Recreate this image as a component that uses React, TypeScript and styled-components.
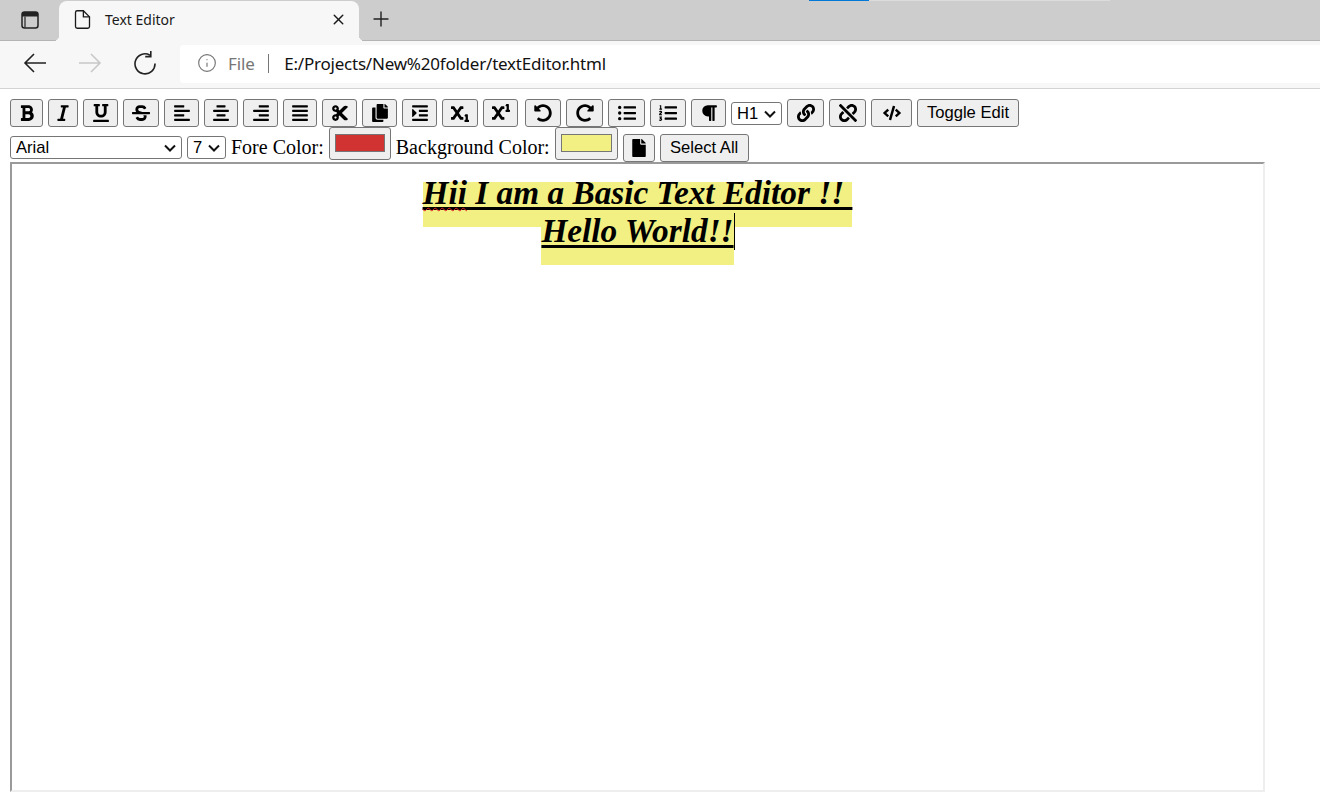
import * as React from 'react'
import styled, { createGlobalStyle } from 'styled-components'
import { FiFile, FiInfo, FiPlus, FiX } from 'react-icons/fi'
import {
    FaAlignCenter, FaAlignJustify, FaAlignLeft, FaAlignRight, FaBold, FaCode, FaCopy, FaCut, FaFile,
    FaIndent, FaItalic, FaLink, FaListOl, FaListUl, FaParagraph, FaRedoAlt, FaStrikethrough,
    FaSubscript, FaSuperscript, FaUnderline, FaUndoAlt, FaUnlink
} from 'react-icons/fa'

const GlobalStyle = createGlobalStyle`
    html, body {
        margin: 0;
        height: 807px;
        overflow: hidden;
        background: #fff;
    }
`

const TabStrip = styled.div`
    position: relative;
    height: 40px;
    background: #cdcdcd;
    border-bottom: 1px solid #b4b4b4;
    display: flex;
    align-items: flex-end;
    font-family: "Noto Sans", sans-serif;
`

const LoadBar = styled.div`
    position: absolute;
    top: 0;
    left: 809px;
    width: 301px;
    height: 1px;
    background: linear-gradient(to right, #0078d7 60px, #dcdcdc 60px);
`

const TabActions = styled.div`
    width: 59px;
    height: 40px;
    display: flex;
    align-items: center;
    justify-content: center;
`

const Tab = styled.div`
    position: relative;
    width: 300px;
    height: 40px;
    margin-bottom: -1px;
    padding: 0 12px 4px 13px;
    box-sizing: border-box;
    background: #f7f7f7;
    border-radius: 8px 8px 0 0;
    display: flex;
    align-items: center;
    color: #1a1a1a;
    font-size: 14px;
    &::before, &::after {
        content: '';
        position: absolute;
        bottom: 0;
        width: 6px;
        height: 6px;
    }
    &::before {
        left: -6px;
        background: radial-gradient(circle at 0 0, transparent 6px, #f7f7f7 6.5px);
    }
    &::after {
        right: -6px;
        background: radial-gradient(circle at 100% 0, transparent 6px, #f7f7f7 6.5px);
    }
`

const TabTitle = styled.span`
    flex: 1;
    margin-left: 12px;
`

const NewTab = styled.div`
    width: 44px;
    height: 40px;
    padding-bottom: 2px;
    box-sizing: border-box;
    display: flex;
    align-items: center;
    justify-content: center;
    color: #222;
`

const NavBar = styled.div`
    height: 47px;
    background: #f7f7f7;
    border-bottom: 1px solid #d2d2d2;
    display: flex;
    align-items: center;
    font-family: "Noto Sans", sans-serif;
`

const NavButtons = styled.div`
    width: 180px;
    padding: 0 0 4px 7px;
    box-sizing: border-box;
    display: flex;
`

const NavButton = styled.div<{ $off?: boolean }>`
    width: 55px;
    display: flex;
    justify-content: center;
    color: ${p => p.$off ? '#c8c8c8' : '#222'};
`

const AddressBar = styled.div`
    flex: 1;
    height: 38px;
    margin-top: -1px;
    padding: 0 0 2px 17px;
    box-sizing: border-box;
    border-radius: 4px 0 0 4px;
    background: #fff;
    display: flex;
    align-items: center;
    font-size: 17px;
`

const FileLabel = styled.span`
    margin-left: 11px;
    color: #767676;
    letter-spacing: -0.1px;
`

const Divider = styled.span`
    width: 1.5px;
    height: 19px;
    margin: 0 15px 0 13px;
    background: #767676;
`

const Url = styled.span`
    color: #111;
    letter-spacing: -0.22px;
`

const Page = styled.div`
    padding: 10px 0 0 10px;
    font-family: "Liberation Serif", serif;
`

const ToolRow = styled.div`
    height: 28px;
    display: flex;
    gap: 5px;
`

const FormatRow = styled.div`
    height: 35px;
    display: flex;
    gap: 5px;
`

const ToolButton = styled.button<{ $width: number; $gap?: number }>`
    width: ${p => p.$width}px;
    height: 28px;
    margin-left: ${p => p.$gap ?? 0}px;
    padding: 0;
    box-sizing: border-box;
    background: #efefef;
    border: 1px solid #767676;
    border-radius: 3px;
    color: #000;
    font-family: "Liberation Sans", sans-serif;
    font-size: 16.6px;
    display: flex;
    align-items: center;
    justify-content: center;
    svg {
        width: 18px;
        height: 18px;
    }
`

const LowButton = styled(ToolButton)`
    margin-top: 7px;
`

const chevron = `url("data:image/svg+xml,%3Csvg xmlns='http://www.w3.org/2000/svg' width='12' height='8' viewBox='0 0 12 8'%3E%3Cpath d='M1 1.5l5 5 5-5' fill='none' stroke='%23111' stroke-width='2'/%3E%3C/svg%3E")`

const Dropdown = styled.select<{ $width: number; $top: number }>`
    appearance: none;
    width: ${p => p.$width}px;
    height: 23px;
    margin-top: ${p => p.$top}px;
    padding: 0 0 0 5px;
    box-sizing: border-box;
    background: #fff ${chevron} no-repeat right 5px center;
    border: 1px solid #767676;
    border-radius: 3px;
    color: #000;
    font-family: "Liberation Sans", sans-serif;
    font-size: 16.6px;
`

const FieldLabel = styled.label`
    margin-top: 8px;
    font-size: 20px;
    line-height: 25px;
    color: #000;
    white-space: nowrap;
`

const ColorButton = styled.div<{ $width: number; $color: string }>`
    width: ${p => p.$width}px;
    height: 33px;
    padding: 6px 5px 7px;
    box-sizing: border-box;
    background: #efefef;
    border: 1px solid #767676;
    border-radius: 3px;
    &::after {
        content: '';
        display: block;
        height: 100%;
        box-sizing: border-box;
        background: ${p => p.$color};
        border: 1px solid #767676;
    }
`

const Editor = styled.div`
    width: 1255px;
    height: 630px;
    padding-top: 10px;
    box-sizing: border-box;
    border: 2px solid;
    border-color: #9a9a9a #eeeeee #eeeeee #9a9a9a;
    text-align: center;
    font-size: 33.3px;
    font-weight: bold;
    font-style: italic;
    line-height: 38px;
    color: #000;
`

const Marked = styled.span`
    padding-bottom: 16px;
    background: linear-gradient(to bottom, transparent 8px, #f2f082 8px);
    text-decoration: underline 3px #000;
    text-underline-offset: 3px;
    text-decoration-skip-ink: none;
`

const Misspelt = styled.span`
    text-decoration: underline wavy 1px #e02020;
    text-underline-offset: 3px;
    text-decoration-skip-ink: none;
`

const Caret = styled.span`
    display: inline-block;
    width: 1px;
    height: 37px;
    margin-right: -1px;
    vertical-align: -8px;
    background: #000;
`

const tools: [number, React.ReactNode][] = [
    [33, <FaBold />],
    [30, <FaItalic />],
    [35, <FaUnderline />],
    [36, <FaStrikethrough />],
    [35, <FaAlignLeft />],
    [34, <FaAlignCenter />],
    [35, <FaAlignRight />],
    [34, <FaAlignJustify />],
    [35, <FaCut />],
    [35, <FaCopy />],
    [35, <FaIndent />],
    [36, <FaSubscript />],
    [35, <FaSuperscript />],
]

const moreTools: [number, React.ReactNode][] = [
    [36, <FaUndoAlt />],
    [37, <FaRedoAlt />],
    [37, <FaListUl />],
    [36, <FaListOl />],
    [35, <FaParagraph />],
]

const linkTools: [number, React.ReactNode][] = [
    [37, <FaLink />],
    [37, <FaUnlink />],
    [41, <FaCode />],
]

const BackIcon = ({ flip }: { flip?: boolean }) => (
    <svg width="24" height="24" viewBox="0 0 24 24" fill="none" stroke="currentColor" strokeWidth="1.6"
        style={flip ? { transform: 'scaleX(-1)' } : undefined}>
        <path d="M23 12H2M11 3l-9 9 9 9" />
    </svg>
)

const ReloadIcon = () => (
    <svg width="24" height="24" viewBox="0 0 24 24" fill="none" stroke="currentColor" strokeWidth="1.6">
        <path d="M17 4.2A10 10 0 1 0 22 12.5" />
        <path d="M17.8 0v5.6h-5.6" />
    </svg>
)

const TabsIcon = () => (
    <svg width="18" height="18" viewBox="0 0 18 18" fill="none">
        <rect x="1" y="1" width="16" height="16" rx="2.5" stroke="#222" strokeWidth="1.5" />
        <path d="M1 3.5A2.5 2.5 0 0 1 3.5 1h11A2.5 2.5 0 0 1 17 3.5V5.5H1z" fill="#222" />
        <path d="M4 5.5v11" stroke="#222" strokeWidth="1.2" />
    </svg>
)

export default function App() {
    return <>
        <GlobalStyle />
        <TabStrip>
            <LoadBar />
            <TabActions><TabsIcon /></TabActions>
            <Tab>
                <FiFile size={21} strokeWidth={1.5} />
                <TabTitle>Text Editor</TabTitle>
                <FiX size={17} strokeWidth={2} />
            </Tab>
            <NewTab><FiPlus size={24} strokeWidth={1.4} /></NewTab>
        </TabStrip>
        <NavBar>
            <NavButtons>
                <NavButton><BackIcon /></NavButton>
                <NavButton $off><BackIcon flip /></NavButton>
                <NavButton><ReloadIcon /></NavButton>
            </NavButtons>
            <AddressBar>
                <FiInfo size={20} strokeWidth={1.4} color="#767676" />
                <FileLabel>File</FileLabel>
                <Divider />
                <Url>E:/Projects/New%20folder/textEditor.html</Url>
            </AddressBar>
        </NavBar>
        <Page>
            <ToolRow>
                {tools.map(([width, icon], i) => <ToolButton key={i} $width={width}>{icon}</ToolButton>)}
                {moreTools.map(([width, icon], i) => <ToolButton key={i} $width={width} $gap={i === 0 ? 2 : 0}>{icon}</ToolButton>)}
                <Dropdown $width={51} $top={3} defaultValue="H1">
                    <option>H1</option>
                </Dropdown>
                {linkTools.map(([width, icon], i) => <ToolButton key={i} $width={width}>{icon}</ToolButton>)}
                <ToolButton $width={102}>Toggle Edit</ToolButton>
            </ToolRow>
            <FormatRow>
                <Dropdown $width={172} $top={9} defaultValue="Arial">
                    <option>Arial</option>
                </Dropdown>
                <Dropdown $width={39} $top={9} defaultValue="7">
                    <option>7</option>
                </Dropdown>
                <FieldLabel>Fore Color:</FieldLabel>
                <ColorButton $width={62} $color="#d13232" />
                <FieldLabel>Background Color:</FieldLabel>
                <ColorButton $width={63} $color="#f2f082" />
                <LowButton $width={32}><FaFile /></LowButton>
                <LowButton $width={89}>Select All</LowButton>
            </FormatRow>
            <Editor>
                <Marked><Misspelt>Hii</Misspelt> I am a Basic Text Editor !!&nbsp;<br />Hello World!!<Caret /></Marked>
            </Editor>
        </Page>
    </>
}
